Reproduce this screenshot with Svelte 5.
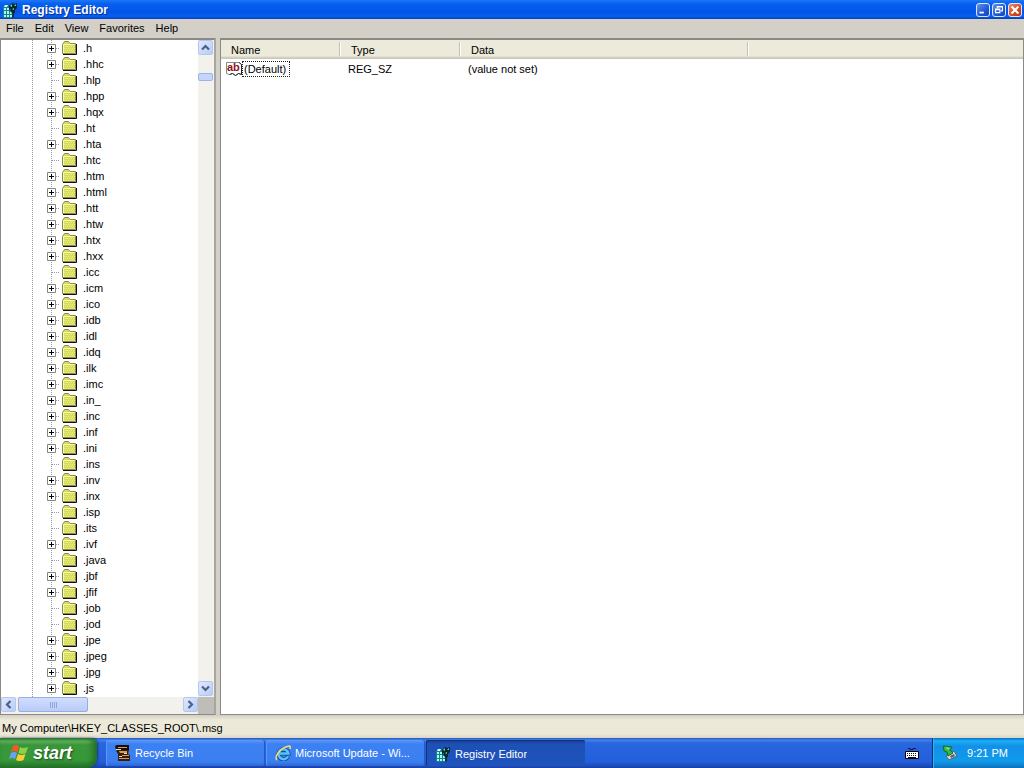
<script>
  const keys = [
    ['.h', 1], ['.hhc', 1], ['.hlp', 0], ['.hpp', 1], ['.hqx', 1], ['.ht', 0], ['.hta', 1], ['.htc', 0],
    ['.htm', 1], ['.html', 1], ['.htt', 1], ['.htw', 1], ['.htx', 1], ['.hxx', 1], ['.icc', 0], ['.icm', 1],
    ['.ico', 1], ['.idb', 1], ['.idl', 1], ['.idq', 1], ['.ilk', 1], ['.imc', 1], ['.in_', 1], ['.inc', 1],
    ['.inf', 1], ['.ini', 1], ['.ins', 0], ['.inv', 1], ['.inx', 1], ['.isp', 0], ['.its', 0], ['.ivf', 1],
    ['.java', 0], ['.jbf', 1], ['.jfif', 1], ['.job', 0], ['.jod', 0], ['.jpe', 1], ['.jpeg', 1], ['.jpg', 1], ['.js', 1]
  ];
  const menus = ['File', 'Edit', 'View', 'Favorites', 'Help'];
</script>

{#snippet regIcon()}
  <svg class="icon" viewBox="0 0 16 16" aria-hidden="true">
    <path d="M1 5l2-2h3l1 2h4v10l-1 1H1z" fill="#1a7f88" />
    <path d="M11 7l1-1v9l-2 1z" fill="#06282f" />
    <path d="M2 6h2v2H2zM5 6h2v2H5zM2 9h2v3H2zM5 9h2v3H5zM8 10h2v2H8zM2 13h2v2H2zM5 13h2v2H5zM8 13h2v2H8z" fill="#9ffaf4" />
    <path d="M3 3h3l-1 2H2z" fill="#d4ffff" />
    <path d="M7 4l3-3 2 1 3-1v5l-2 2v3l-3 1-1-3-2-1z" fill="#06282f" />
    <path d="M8 4l2-2v3zM12 4l2-2v2zM10 7l2-1v2zM8 7l1 1H8z" fill="#5fd5cf" />
  </svg>
{/snippet}

{#snippet chevron(d)}
  <svg class="chev" viewBox="0 0 9 9" aria-hidden="true"><path {d} fill="none" stroke="#4d6185" stroke-width="2.2" /></svg>
{/snippet}

<div class="screen">
  <header class="title">
    {@render regIcon()}
    <h1>Registry Editor</h1>
    <div class="controls">
      <button aria-label="Minimize"><svg viewBox="0 0 14 14"><path d="M3 9h5v2H3z" fill="#fff" /></svg></button>
      <button aria-label="Restore"><svg viewBox="0 0 14 14"><path d="M5 5V3h6v5H9M5 3.5h6M3 6h5v4H3zM3 6.5h5" fill="none" stroke="#fff" stroke-width="1.3" /></svg></button>
      <button class="close" aria-label="Close"><svg viewBox="0 0 14 14"><path d="M3 3l8 8M11 3l-8 8" stroke="#fff" stroke-width="2.4" /></svg></button>
    </div>
  </header>

  <nav class="menu">
    {#each menus as m}<button>{m}</button>{/each}
  </nav>

  <main>
    <section class="tree">
      <ul>
        {#each keys as [name, expandable]}
          <li>
            <span class="branch">
              {#if expandable}
                <button class="plus" aria-label="Expand {name}">
                  <svg viewBox="0 0 9 9"><path d="M0.5 0.5h8v8h-8z" fill="#fff" stroke="#858585" /><path d="M2 4.5h5M4.5 2v5" stroke="#000" /></svg>
                </button>
              {/if}
            </span>
            <svg class="folder" viewBox="0 0 16 16" aria-hidden="true">
              <path d="M2 14.500h13.500V4" fill="none" stroke="#111" />
              <path d="M1.500 13.500V4.500l2-3h4l1.500 2h5.500v10z" fill="#d6dc5c" stroke="#8b8d45" />
              <path d="M2.500 13V4.500h11" fill="none" stroke="#f8f8b8" />
              <path d="M4 6.500h10M3 8.500h11M4 10.500h10M3 12.500h11" stroke="#eef08c" stroke-dasharray="1 1" />
            </svg>
            <span class="key">{name}</span>
          </li>
        {/each}
      </ul>
      <div class="vbar">
        <button class="sb" aria-label="Scroll up">{@render chevron('M1 6.500l3.500-3.500l3.500 3.500')}</button>
        <div class="vthumb"></div>
        <button class="sb" aria-label="Scroll down">{@render chevron('M1 2.500l3.500 3.500l3.500-3.500')}</button>
      </div>
      <div class="hbar">
        <button class="sb" aria-label="Scroll left">{@render chevron('M6.500 1l-3.500 3.500l3.500 3.500')}</button>
        <div class="hthumb"><i></i><i></i><i></i><i></i></div>
        <button class="sb" aria-label="Scroll right">{@render chevron('M2.500 1l3.500 3.500l-3.500 3.500')}</button>
      </div>
      <div class="corner"></div>
    </section>

    <section class="values">
      <table>
        <colgroup><col class="c1" /><col class="c2" /><col class="c3" /><col /></colgroup>
        <thead><tr><th>Name</th><th>Type</th><th>Data</th><th></th></tr></thead>
        <tbody>
          <tr>
            <td>
              <div class="name">
                <svg class="icon" viewBox="0 0 16 16" aria-hidden="true">
                  <path d="M0.500 1.500h13l2 2v10l-3-1-3 2-3-2-3 1-3-1z" fill="#fff" stroke="#8a8a8a" />
                  <path d="M13 1.500l2.500 2v10l-3-1-3 2-3-2-3 1" fill="none" stroke="#222" />
                  <text x="1" y="10">ab</text>
                </svg><span class="focus">(Default)</span>
              </div>
            </td>
            <td>REG_SZ</td><td>(value not set)</td><td></td>
          </tr>
        </tbody>
      </table>
    </section>
  </main>

  <div class="status">My Computer\HKEY_CLASSES_ROOT\.msg</div>

  <footer>
    <button class="start">
      <svg viewBox="0 0 20 18" aria-hidden="true">
        <path d="M4 2q3-2 6 0L8.500 8Q5 6 2 8z" fill="#ef5a2c" />
        <path d="M11 3q3 2 8 0l-2 6q-4 2-7.500 0z" fill="#8fd04a" />
        <path d="M2 9q3-2 6 0l-2 6q-3-2-6 0z" fill="#6ca0f7" />
        <path d="M9 10q3 2 7.500 0l-2 6q-4 2-7.500 0z" fill="#fccb35" />
      </svg>
      <span>start</span>
    </button>
    <div class="tasks">
      <button class="task">
        <svg class="icon" viewBox="0 0 16 16" aria-hidden="true">
          <path d="M0 1l2-1h12v5H1z" fill="#15100e" /><path d="M3 2h9v1H3z" fill="#e2a04c" />
          <path d="M2 5h12l-1 4 2 1v6H3V9L1 6z" fill="#332015" />
          <path d="M4 6h8v2H5zM7 10h7v1H7zM4 13h10v1H4z" fill="#e19a4b" /><path d="M1 4h5v1H1zM9 8h3v1H9zM4 11h3v1H4z" fill="#eee1c2" />
        </svg><span>Recycle Bin</span>
      </button>
      <button class="task">
        <svg class="icon" viewBox="0 0 16 16" aria-hidden="true">
          <path d="M13 11.500A5 5 0 1 1 13.500 8.500H5" fill="none" stroke="#0b4b9b" stroke-width="4" />
          <path d="M13 11.500A5 5 0 1 1 13.500 8.500H5" fill="none" stroke="#5bc4f5" stroke-width="2.500" />
          <path d="M2 15C-1 13 4 3 14 1q2 0 1 3" fill="none" stroke="#f4d773" stroke-width="1.600" />
        </svg><span>Microsoft Update - Wi...</span>
      </button>
      <button class="task active">{@render regIcon()}<span>Registry Editor</span></button>
    </div>
    <button class="lang" aria-label="Keyboard">
      <svg class="icon" viewBox="0 0 16 16" aria-hidden="true">
        <path d="M4 3.500h2v1h3v-1h3" fill="none" stroke="#081c50" />
        <path d="M1.500 6.500h13v7h-13z" fill="#fff" stroke="#000" />
        <path d="M3 8.500h10M3 10.500h10" stroke="#111" stroke-dasharray="1 1" /><path d="M4 12.500h8" stroke="#111" />
      </svg>
    </button>
    <div class="tray">
      <svg class="icon" viewBox="0 0 16 16" aria-hidden="true">
        <path d="M4 11l8-5 3 5-8 4z" fill="#d5dcd8" stroke="#51606b" /><path d="M8 11l4-2 1 2-4 2z" fill="#56666d" />
        <path d="M1 1l9 1-2 3 3 3-5 3-1-4-3-1z" fill="#36b63f" stroke="#12702a" />
        <path d="M3 2l5 1-2 2z" fill="#8be486" />
      </svg>
      <time>9:21 PM</time>
    </div>
  </footer>
</div>

<style>
  :global(body) { margin: 0; }
  .screen { height: 100vh; min-height: 480px; display: flex; flex-direction: column; overflow: hidden; background: #d4d0c8; color: #000; font: 11px/16px "Liberation Sans", Arial, sans-serif; }
  button { font: inherit; color: inherit; border: 0; padding: 0; margin: 0; background: none; }
  svg { display: block; flex: none; }
  .icon { width: 16px; height: 16px; }
  .title { flex: none; height: 19px; display: flex; align-items: center; gap: 4px; padding: 0 2px; background: linear-gradient(#1c78f5, #0560f0 20%, #0454e4 65%, #0560f5 85%, #0340b8); color: #fff; }
  h1 { flex: 1; margin: 0; font-size: 12px; line-height: 18px; font-weight: bold; text-shadow: 1px 1px #0a2f94; }
  .controls { display: flex; gap: 2px; }
  .controls button { width: 14px; height: 14px; box-sizing: border-box; border: 1px solid #dbe7fd; border-radius: 3px; background: linear-gradient(135deg, #6593f0, #2058d2 60%, #1747b8); }
  .controls svg { width: 12px; height: 12px; }
  .controls .close { background: linear-gradient(135deg, #e99072, #d84b20 55%, #b83312); }
  .menu { flex: none; height: 19px; box-sizing: border-box; display: flex; gap: 11px; padding: 0 6px 2px; align-items: center; }
  main { flex: 1; min-height: 0; display: grid; grid-template-columns: 216px minmax(0, 1fr); gap: 4px; }
  .tree { display: grid; grid-template: minmax(0, 1fr) 17px / minmax(0, 1fr) 16px; overflow: hidden; background: #fff; border: 1px solid #8a8a88; border-color: #8a8a88 #a8a6a0 #8a8a88 #8a8a88; border-right-width: 2px; border-top-width: 2px; }
  ul { list-style: none; margin: 0; padding: 0 0 0 31px; overflow: hidden; background: repeating-linear-gradient(#999 0 1px, #fff 1px 2px) 31px 0 / 1px 100% no-repeat; }
  li { display: flex; align-items: center; height: 16px; }
  .branch { width: 28px; height: 16px; display: flex; align-items: center; padding-left: 15px; box-sizing: border-box; background: repeating-linear-gradient(#999 0 1px, transparent 1px 2px) 19px 0 / 1px 16px no-repeat, repeating-linear-gradient(90deg, #999 0 1px, transparent 1px 2px) 20px 8px / 8px 1px no-repeat; }
  .plus, .plus svg { width: 9px; height: 9px; display: block; }
  .folder { width: 16px; height: 16px; margin-left: 1px; }
  .key { margin-left: 6px; }
  .vbar { display: flex; flex-direction: column; padding-bottom: 1px; background: #f2f1ec; }
  .vbar .sb:last-child { margin-top: auto; }
  .sb { width: 15px; height: 15px; flex: none; box-sizing: border-box; display: grid; place-items: center; border: 1px solid #b5c7ef; border-radius: 2px; background: linear-gradient(135deg, #e0e9ff, #b9cbf6); }
  .chev { width: 9px; height: 9px; }
  .vthumb { width: 13px; height: 6px; margin-top: 18px; border: 1px solid #9db3e6; border-radius: 2px; background: #c5d5fc; }
  .hbar { display: flex; background: #f2f1ec; align-items: flex-start; }
  .hbar .sb:last-child { margin-left: auto; }
  .hthumb { width: 70px; height: 15px; margin-left: 2px; box-sizing: border-box; display: flex; gap: 1px; align-items: center; justify-content: center; border: 1px solid #98aee0; border-radius: 2px; background: linear-gradient(#d0ddff, #bacbf8); }
  .hthumb i { width: 1px; height: 6px; background: #8fa6dc; }
  .corner { background: #bfbdb7; }
  .values { overflow: hidden; background: #fff; border: 1px solid #8a8a88; border-top-width: 2px; }
  table { width: 100%; table-layout: fixed; border-collapse: collapse; }
  .c1, .c2 { width: 120px; }
  .c3 { width: 288px; }
  th { height: 19px; padding: 0 10px; box-sizing: border-box; text-align: left; font-weight: normal; background: linear-gradient(90deg, #ebeadb calc(100% - 2px), #c5c2b2 calc(100% - 2px), #c5c2b2 calc(100% - 1px), #fff calc(100% - 1px)) 0 2px / 100% 14px no-repeat, linear-gradient(#ebeadb 16px, #d8d5c6 17px, #c6c2b0); }
  th:last-child { background: linear-gradient(#ebeadb 16px, #d8d5c6 17px, #c6c2b0); }
  td { padding: 1px 7px 0; height: 18px; }
  td:first-child { padding: 1px 5px 0; }
  .name { display: flex; align-items: center; }
  .name text { font: bold 11px "Liberation Sans", sans-serif; fill: #8d1020; }
  .focus { border: 1px dotted #222; padding: 0 3px 0 1px; line-height: 14px; }
  .status { flex: none; height: 22px; padding: 2px; box-sizing: border-box; line-height: 20px; margin-top: 1px; background: linear-gradient(#d8d5c8, #ece9d8 4px, #ece9d8 18px, #dad6c6); }
  footer { flex: none; height: 30px; display: flex; background: linear-gradient(#2456bd, #4482ed 2px, #2866de 5px, #245edb 24px, #1941a5); color: #fff; }
  .start { width: 97px; display: flex; align-items: center; gap: 4px; padding: 0 9px; border-radius: 0 6px 10px 0; background: linear-gradient(#2f7930, #65b863 3px, #3a963a 7px, #379937 22px, #24712a); box-shadow: inset -4px 0 6px #226c27, 1px 0 2px #163a85; font-size: 18px; font-weight: bold; font-style: italic; text-shadow: 1px 1px 2px #174d1b; }
  .start svg { width: 20px; height: 18px; }
  .tasks { flex: 1; min-width: 0; display: flex; gap: 1px; padding: 2px 0 2px 9px; }
  .task { flex: 0 1 159px; min-width: 0; display: flex; align-items: center; gap: 4px; padding: 0 9px; box-sizing: border-box; border-radius: 2px; background: linear-gradient(#6098f7, #3c81f3 4px, #3b7ef0 22px, #2d65d4); box-shadow: inset 1px 0 #5d97fa, inset -1px 0 #2459c6; }
  .task span { white-space: nowrap; overflow: hidden; text-overflow: ellipsis; }
  .task.active { padding-top: 2px; background: linear-gradient(#163c8e, #1e50b6 4px, #1f54bd); box-shadow: inset 1px 1px #123477; }
  .lang { width: 40px; display: grid; place-items: center; }
  .tray { width: 92px; box-sizing: border-box; display: flex; align-items: center; justify-content: space-between; padding: 0 16px 0 9px; border-left: 1px solid #092e70; background: linear-gradient(#0d6cc8, #1cb0f5 3px, #1290e9 8px, #109bea 23px, #0d70bc); box-shadow: inset 1px 0 #21baf5; }
</style>
